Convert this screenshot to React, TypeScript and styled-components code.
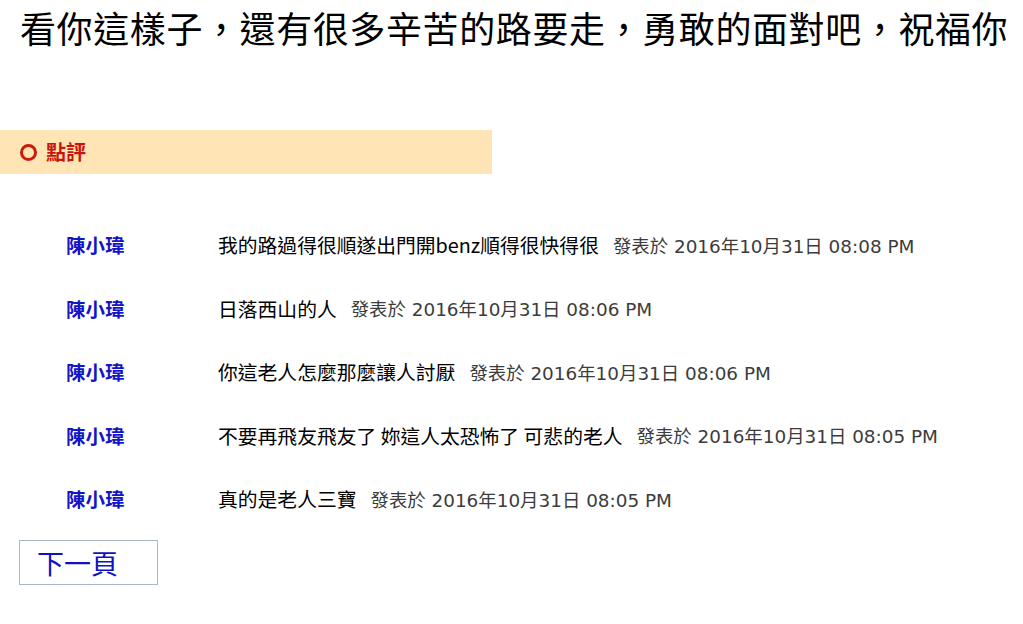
import React from "react";
import styled, { createGlobalStyle } from "styled-components";

const Global = createGlobalStyle`
  html, body { margin: 0; padding: 0; background: #ffffff; }
  body { font-family: "Noto Sans CJK TC", "Noto Sans", sans-serif; color: #000; }
`;

const Page = styled.div`
  display: flex;
  flex-direction: column;
  width: 1023px;
`;

const Title = styled.h1`
  margin: 0;
  padding-left: 20px;
  font-size: 36px;
  font-weight: 400;
  line-height: 54px;
  letter-spacing: 0.6px;
  color: #000;
  white-space: nowrap;
`;

const SectionBar = styled.div`
  margin-top: 76px;
  width: 492px;
  height: 44px;
  background: #ffe5b6;
  display: flex;
  align-items: center;
  gap: 9px;
  padding-left: 20px;
  box-sizing: border-box;
`;

const Ring = styled.span`
  width: 17px;
  height: 17px;
  border: 3px solid #cc1a0a;
  border-radius: 50%;
  box-sizing: border-box;
  flex: none;
`;

const SectionLabel = styled.span`
  font-size: 20px;
  font-weight: 700;
  color: #c8140a;
  line-height: 1;
`;

const List = styled.ul`
  list-style: none;
  margin: 39px 0 0 0;
  padding: 0;
  display: flex;
  flex-direction: column;
`;

const Row = styled.li`
  height: 63.5px;
  display: flex;
  align-items: center;
  padding-left: 66px;
`;

const Name = styled.span`
  width: 152px;
  flex: none;
  font-size: 19.5px;
  font-weight: 700;
  color: #1414c8;
`;

const Comment = styled.span`
  font-size: 19.8px;
  color: #000;
  white-space: nowrap;
`;

const Stamp = styled.span`
  margin-left: 14px;
  font-family: "DejaVu Sans", "Noto Sans CJK TC", sans-serif;
  font-size: 18.4px;
  color: #3c3c3c;
  white-space: nowrap;
`;

const NextButton = styled.button`
  margin: 9px 0 0 19px;
  width: 139px;
  height: 45px;
  background: #fff;
  border: 1px solid #a6b9cd;
  padding: 0 0 0 17px;
  box-sizing: border-box;
  text-align: left;
  font-family: "Noto Sans CJK TC", "Noto Sans", sans-serif;
  font-size: 27px;
  color: #1010c4;
  line-height: 1;
  cursor: pointer;
`;

const comments = [
  { text: "我的路過得很順遂出門開benz順得很快得很", time: "2016年10月31日 08:08 PM" },
  { text: "日落西山的人", time: "2016年10月31日 08:06 PM" },
  { text: "你這老人怎麼那麼讓人討厭", time: "2016年10月31日 08:06 PM" },
  { text: "不要再飛友飛友了 妳這人太恐怖了 可悲的老人", time: "2016年10月31日 08:05 PM" },
  { text: "真的是老人三寶", time: "2016年10月31日 08:05 PM" },
];

export default function App() {
  return (
    <>
      <Global />
      <Page lang="zh-Hant-TW">
        <Title>看你這樣子，還有很多辛苦的路要走，勇敢的面對吧，祝福你</Title>
        <SectionBar>
          <Ring />
          <SectionLabel>點評</SectionLabel>
        </SectionBar>
        <List>
          {comments.map((c, i) => (
            <Row key={i}>
              <Name>陳小瑋</Name>
              <Comment>{c.text}</Comment>
              <Stamp>發表於 {c.time}</Stamp>
            </Row>
          ))}
        </List>
        <div>
          <NextButton>下一頁</NextButton>
        </div>
      </Page>
    </>
  );
}
